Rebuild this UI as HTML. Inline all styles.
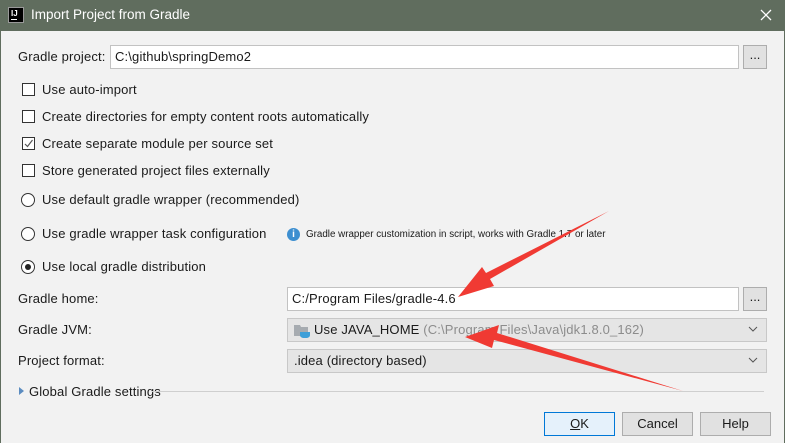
<!DOCTYPE html>
<html><head><style>
*{margin:0;padding:0;box-sizing:border-box}
body{width:785px;height:443px;overflow:hidden;background:#606d5e;font-family:"Liberation Sans","Noto Sans CJK SC",sans-serif;font-size:13px;color:#1a1a1a;position:relative}
.title{position:absolute;left:0;top:0;width:785px;height:31px;background:#606d5e;color:#fff;font-size:13.5px}
.client{position:absolute;left:1px;top:31px;width:783px;height:412px;background:#f2f2f2}
.a{position:absolute;white-space:nowrap}
.t{letter-spacing:0.15px}
.inp{position:absolute;background:#fff;border:1px solid #c2c2c2;height:24px;padding:3px 4px;font-size:13px}
.btn{position:absolute;background:#e1e1e1;border:1px solid #adadad;height:24px;text-align:center;line-height:22px}
.cb{position:absolute;width:13px;height:13px;border:1px solid #333;background:#fff}
.rb{position:absolute;width:14px;height:14px;border:1px solid #333;border-radius:50%;background:#fff}
.combo{position:absolute;background:#e5e5e5;border:1px solid #c8c8c8;height:24px;padding:3px 6px}
.chev{position:absolute;right:8px;top:5px}
</style></head><body>
<div class="title">
<div class="a" style="left:8px;top:7px;width:16px;height:16px;background:#000;border:1px solid #999"><span style="color:#fff;font-size:8px;font-weight:bold;position:absolute;left:2px;top:1px">IJ</span><span style="position:absolute;left:2px;bottom:2px;width:6px;height:1px;background:#fff"></span></div>
<div class="a" style="left:31px;top:7px">Import Project from Gradle</div>
<svg class="a" style="left:760px;top:9px" width="12" height="12"><path d="M1 1L11 11M11 1L1 11" stroke="#fff" stroke-width="1.3"/></svg>
</div>
<div class="client"></div>
<div class="a t" style="left:18px;top:49px">Gradle project:</div>
<div class="inp t" style="left:110px;top:45px;width:629px">C:\github\springDemo2</div>
<div class="btn" style="left:743px;top:45px;width:24px;line-height:18px">...</div>

<div class="cb" style="left:22px;top:83px"></div><div class="a t" style="left:42px;top:82px">Use auto-import</div>
<div class="cb" style="left:22px;top:110px"></div><div class="a t" style="left:42px;top:109px">Create directories for empty content roots automatically</div>
<div class="cb" style="left:22px;top:137px"><svg width="11" height="11" style="position:absolute;left:0;top:0"><path d="M2 6L4.5 8.5L9.5 2" stroke="#555" fill="none" stroke-width="1.2"/></svg></div><div class="a t" style="left:42px;top:136px">Create separate module per source set</div>
<div class="cb" style="left:22px;top:164px"></div><div class="a t" style="left:42px;top:163px">Store generated project files externally</div>

<div class="rb" style="left:21px;top:193px"></div><div class="a t" style="left:42px;top:192px">Use default gradle wrapper (recommended)</div>
<div class="rb" style="left:21px;top:227px"></div><div class="a t" style="left:42px;top:226px">Use gradle wrapper task configuration</div>
<div class="a" style="left:287px;top:228px;width:13px;height:13px;border-radius:50%;background:#3d8fd0;color:#fff;font-size:10px;font-weight:bold;text-align:center;line-height:13px">i</div>
<div class="a" style="left:306px;top:229px;font-size:9.8px">Gradle wrapper customization in script, works with Gradle 1.7 or later</div>
<div class="rb" style="left:21px;top:260px"><div style="position:absolute;left:3px;top:3px;width:6px;height:6px;border-radius:50%;background:#222"></div></div><div class="a t" style="left:42px;top:259px">Use local gradle distribution</div>

<div class="a t" style="left:18px;top:291px">Gradle home:</div>
<div class="inp t" style="left:287px;top:287px;width:452px">C:/Program Files/gradle-4.6</div>
<div class="btn" style="left:743px;top:287px;width:24px;line-height:18px">...</div>
<div class="a t" style="left:18px;top:322px">Gradle JVM:</div>
<div class="combo t" style="left:287px;top:318px;width:480px"><svg width="18" height="14" style="position:absolute;left:6px;top:5px"><path d="M0 1h6l1 2h7v9H0z" fill="#a6abb0"/><path d="M6 8h10v3c0 2-2 3-4 3h-2c-2 0-4-1-4-3z" fill="#3d9fd8"/></svg><span style="margin-left:20px">Use JAVA_HOME <span style="color:#8c8c8c">(C:\Program Files\Java\jdk1.8.0_162)</span></span><svg class="chev" width="10" height="10"><path d="M1 3L5 7L9 3" stroke="#555" fill="none"/></svg></div>
<div class="a t" style="left:18px;top:353px">Project format:</div>
<div class="combo t" style="left:287px;top:349px;width:480px">.idea (directory based)<svg class="chev" width="10" height="10"><path d="M1 3L5 7L9 3" stroke="#555" fill="none"/></svg></div>

<svg class="a" style="left:19px;top:387px" width="6" height="8"><path d="M0 0L5 4L0 8z" fill="#5b8cc0"/></svg>
<div class="a t" style="left:29px;top:384px">Global Gradle settings</div>
<div class="a" style="left:152px;top:391px;width:612px;height:1px;background:#cfcfcf"></div>

<div class="btn" style="left:544px;top:412px;width:71px;background:#e5f1fb;border-color:#0078d7"><u>O</u>K</div>
<div class="btn" style="left:622px;top:412px;width:71px">Cancel</div>
<div class="btn" style="left:700px;top:412px;width:71px">Help</div>

<svg class="a" style="left:0;top:0" width="785" height="443">
<path d="M609 211L490 279L494 286L458 297L482 267L486 273Z" fill="#f03a33"/>
<path d="M683 391L494 340L492 348L465 337L499 325L497 333Z" fill="#f03a33"/>
</svg>
</body></html>
